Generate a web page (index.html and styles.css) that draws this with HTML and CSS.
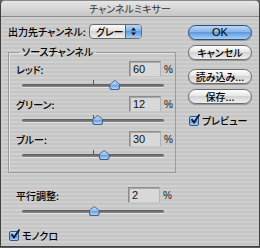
FILE: index.html
```html
<!DOCTYPE html>
<html lang="ja">

<head>
    <meta charset="utf-8">
    <link rel="stylesheet" href="styles.css">
</head>

<body>
    <div class="window">
        <div class="titlebar">チャンネルミキサー</div>
        <div class="content">
            <div class="main">
                <div class="output-row">
                    <span class="label">出力先チャンネル:</span>
                    <div class="popup">
                        <span class="popup-text">グレー</span>
                        <span class="popup-arrows">
                            <svg width="7" height="9" viewBox="0 0 7 9">
                                <path d="M3.5 0.5 L6 3.5 L1 3.5 Z" fill="#111"/>
                                <path d="M3.5 8.5 L6 5.5 L1 5.5 Z" fill="#111"/>
                            </svg>
                        </span>
                    </div>
                </div>

                <fieldset class="group">
                    <legend>ソースチャンネル</legend>
                    <div class="channel">
                        <div class="channel-top">
                            <span class="label">レッド:</span>
                            <span class="field">60</span>
                            <span class="pct">%</span>
                        </div>
                        <div class="slider">
                            <span class="tick"></span>
                            <span class="track"></span>
                            <span class="thumb" style="left: 65%"></span>
                        </div>
                    </div>
                    <div class="channel">
                        <div class="channel-top">
                            <span class="label">グリーン:</span>
                            <span class="field">12</span>
                            <span class="pct">%</span>
                        </div>
                        <div class="slider">
                            <span class="tick"></span>
                            <span class="track"></span>
                            <span class="thumb" style="left: 53%"></span>
                        </div>
                    </div>
                    <div class="channel">
                        <div class="channel-top">
                            <span class="label">ブルー:</span>
                            <span class="field">30</span>
                            <span class="pct">%</span>
                        </div>
                        <div class="slider">
                            <span class="tick"></span>
                            <span class="track"></span>
                            <span class="thumb" style="left: 57.5%"></span>
                        </div>
                    </div>
                </fieldset>

                <div class="channel constant">
                    <div class="channel-top">
                        <span class="label">平行調整:</span>
                        <span class="field">2</span>
                        <span class="pct">%</span>
                    </div>
                    <div class="slider">
                        <span class="track"></span>
                        <span class="thumb" style="left: 50.5%"></span>
                    </div>
                </div>

                <label class="check mono">
                    <span class="box">
                        <svg width="10" height="10" viewBox="0 0 10 10">
                            <path d="M1.5 5 L4 8.5 L9.5 0.5" fill="none" stroke="#0b1630" stroke-width="1.8"/>
                        </svg>
                    </span>
                    モノクロ
                </label>
            </div>

            <div class="side">
                <div class="button default">OK</div>
                <div class="button cancel">キャンセル</div>
                <div class="button load">読み込み...</div>
                <div class="button save">保存...</div>
                <label class="check preview">
                    <span class="box">
                        <svg width="10" height="10" viewBox="0 0 10 10">
                            <path d="M1.5 5 L4 8.5 L9.5 0.5" fill="none" stroke="#0b1630" stroke-width="1.8"/>
                        </svg>
                    </span>
                    プレビュー
                </label>
            </div>
        </div>
    </div>
</body>
</html>
```

FILE: styles.css
```css
* {
    box-sizing: border-box;
}

body {
    margin: 0;
    width: 260px;
    height: 248px;
    background: #5e5e5e;
    font-family: "Noto Sans CJK JP", "Noto Sans", sans-serif;
    font-size: 10px;
    color: #111;
    font-feature-settings: "palt";
}

.window {
    height: 247px;
    border: 1px solid #3f3f3f;
    border-top-color: #8a8a8a;
    border-radius: 5px 5px 0 0;
    background: repeating-linear-gradient(#cfcfcf 0 2px, #c5c5c5 2px 4px);
    display: flex;
    flex-direction: column;
    overflow: hidden;
}

.titlebar {
    flex: none;
    height: 16px;
    line-height: 15px;
    text-align: center;
    color: #333;
    background: linear-gradient(#e6e6e6, #c6c6c6);
    border-bottom: 1px solid #8a8a8a;
}

.content {
    flex: 1;
    display: flex;
    padding: 7px 0 0 7px;
}

.main {
    width: 168px;
    display: flex;
    flex-direction: column;
}

.label {
    font-weight: 500;
    color: #000;
}

.output-row {
    display: flex;
    align-items: center;
    height: 15px;
    gap: 3px;
}

.popup {
    display: flex;
    width: 53px;
    height: 15px;
    border: 1px solid #6a6a6a;
    border-radius: 4px;
    overflow: hidden;
    background: linear-gradient(#fafafa, #e2e2e2 50%, #d4d4d4 50%, #eeeeee);
}

.popup-text {
    flex: 1;
    padding-left: 6px;
    line-height: 13px;
    font-weight: 500;
    color: #000;
}

.popup-arrows {
    width: 16px;
    display: flex;
    align-items: center;
    justify-content: center;
    border-left: 1px solid #44679b;
    background: linear-gradient(#b9d4f3, #7eaee6 50%, #5f99de 50%, #a6cdf4);
}

.group {
    margin: 7px 0 0 0;
    padding: 3px 4px 6px 7px;
    border: 1px solid #9a9a9a;
    box-shadow: inset 1px 1px 0 #e2e2e2;
}

.group legend {
    margin-left: 3px;
    padding: 0 3px;
    line-height: 12px;
    font-weight: 500;
    color: #000;
}

.channel {
    height: 35px;
}

.channel-top {
    display: flex;
    align-items: center;
    height: 16px;
}

.channel-top .label {
    flex: 1;
}

.field {
    width: 32px;
    height: 16px;
    padding-left: 3px;
    line-height: 15px;
    font-family: "Liberation Sans", sans-serif;
    font-size: 11px;
    background: #d8d8d8;
    border: 1px solid #8c8c8c;
    border-right-color: #b4b4b4;
    border-bottom-color: #c8c8c8;
    box-shadow: inset 1px 1px 0 #a8a8a8;
}

.pct {
    width: 7px;
    margin-left: 3px;
    font-family: "Liberation Sans", sans-serif;
    font-size: 10px;
    color: #1a1a1a;
}

.slider {
    position: relative;
    height: 19px;
    width: 142px;
    margin-left: 6px;
}

.track {
    position: absolute;
    left: 0;
    right: 0;
    top: 7px;
    height: 3px;
    border-radius: 2px;
    background: linear-gradient(#5a5a5a, #8a8a8a);
    box-shadow: 0 1px 0 #e4e4e4;
}

.tick {
    position: absolute;
    left: 50%;
    top: 3px;
    width: 1px;
    height: 6px;
    background: #555;
}

.thumb {
    position: absolute;
    top: 3px;
    width: 11px;
    height: 10px;
    margin-left: -5px;
    clip-path: polygon(50% 0, 100% 45%, 100% 80%, 85% 100%, 15% 100%, 0 80%, 0 45%);
    background: #3d6096;
}

.thumb::after {
    content: "";
    position: absolute;
    inset: 1px;
    clip-path: polygon(50% 0, 100% 45%, 100% 80%, 85% 100%, 15% 100%, 0 80%, 0 45%);
    background: linear-gradient(#cfe0f5, #8db6e6 55%, #6ea2de 56%, #b4d6f5);
}

.constant {
    margin-top: 14px;
    padding: 0 6px 0 8px;
}

.check {
    display: flex;
    align-items: center;
    gap: 3px;
    font-weight: 500;
    color: #000;
    height: 11px;
}

.box {
    width: 10px;
    height: 10px;
    border: 1px solid #34538a;
    border-radius: 2px;
    background: linear-gradient(#c5dbf5, #7fb0e8 50%, #5f99de 50%, #a9d0f5);
    display: flex;
    align-items: center;
    justify-content: center;
    overflow: visible;
}

.box svg {
    margin-top: -3px;
    margin-left: 1px;
    flex: none;
}

.mono {
    margin-top: 8px;
    margin-left: 1px;
}

.side {
    width: 64px;
    margin-left: 12px;
    display: flex;
    flex-direction: column;
}

.button {
    height: 15px;
    line-height: 13px;
    text-align: center;
    font-weight: 500;
    color: #000;
    border: 1px solid #6c6c6c;
    border-radius: 8px;
    background: linear-gradient(#fdfdfd, #e4e4e4 50%, #d2d2d2 50%, #efefef);
    box-shadow: 0 1px 1px rgba(0, 0, 0, 0.25);
}

.default {
    margin-top: 1px;
    font-family: "Liberation Sans", sans-serif;
    font-size: 11px;
    border-color: #2b4d86;
    background: linear-gradient(#bcd6f4, #82b1e7 50%, #5f99de 50%, #a9d0f5);
}

.cancel {
    margin-top: 5px;
}

.load {
    margin-top: 9px;
}

.save {
    margin-top: 5px;
}

.preview {
    margin-top: 11px;
    margin-left: 1px;
}
```
